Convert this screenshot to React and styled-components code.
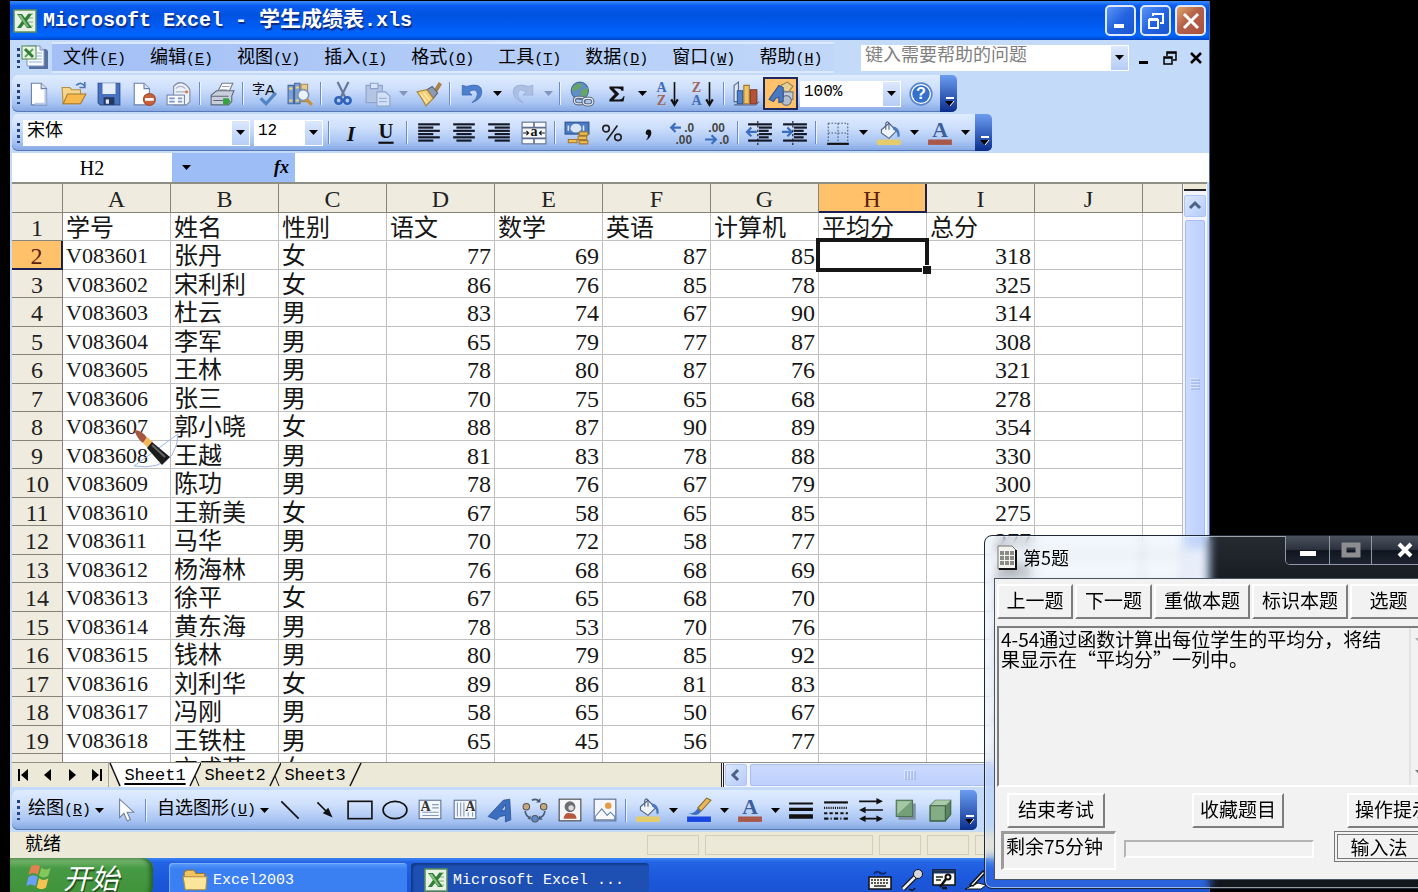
import React from 'react';
import styled, { createGlobalStyle, css } from 'styled-components';

const serif = '"Liberation Serif", "Noto Sans CJK SC", serif';
const mono = '"Liberation Mono", "Noto Sans CJK SC", monospace';
const sans = '"Noto Sans CJK SC", sans-serif';

const beige = '#ece9d8';
const headerLine = '#85847a';
const cellLine = '#c0c0c0';
const orange = '#ffc169';
const barGradient = 'linear-gradient(#dfecff, #cfe0fc 35%, #a9c5f3 75%, #83a6e2)';

const GlobalStyle = createGlobalStyle`
    * { box-sizing: border-box; }
    body { margin: 0; background: #000; overflow: hidden; }
    button, input, select, textarea { font: inherit; color: inherit; margin: 0; padding: 0; border: 0; border-radius: 0; background: none; outline: none; }
    svg { display: block; flex: none; overflow: visible; }
`;

const Desktop = styled.div`
    position: relative;
    height: 100vh;
    overflow: hidden;
    padding: 1px 208px 0 10px;
    background: #000;
    color: #000;
    font-family: ${mono};
    font-size: 15px;
`;

const Window = styled.div`
    display: flex;
    flex-direction: column;
    height: 100%;
    border-right: 1px solid #44669c;
    background: #c3daf9;
`;

const TitleBar = styled.header`
    flex: none;
    display: flex;
    align-items: center;
    gap: 4px;
    height: 39px;
    padding: 0 3px;
    background: linear-gradient(#3a8cff, #0a5cf0 12%, #0052e0 35%, #0060fa 75%, #0066ff 88%, #0046c8);
    color: #fff;
    font-weight: bold;
    font-size: 20px;

    h1 {
        flex: 1;
        margin: 0 0 0 2px;
        font-size: 20px;
        line-height: 30px;
        white-space: pre;
        text-shadow: 1px 2px 1px #0a2a80;
    }
    h1 span { font-size: 21px; }
`;

const CaptionButton = styled.button`
    display: grid;
    place-items: center;
    width: 31px;
    height: 31px;
    border: 2px solid #dfe9ff;
    border-radius: 5px;
    background: ${p => p.$close ? 'linear-gradient(135deg, #e0a566, #b4604a 45%, #a8523e)' : 'linear-gradient(135deg, #5b96f8, #2363e0 50%, #1a56d0)'};
`;

const MenuRow = styled.nav`
    flex: none;
    display: flex;
    align-items: center;
    height: 35px;
    padding-left: 6px;
`;

const MenuList = styled.div`
    display: flex;
    align-items: center;
    gap: 24px;
    height: 31px;
    margin-left: 3px;
    padding: 2px 12px 0 11px;
    border-top: 2px solid #dbe8fd;
    border-bottom: 2px solid #dbe8fd;
    background: linear-gradient(90deg, #a3bff5, #c0d7f9);
`;

const MenuButton = styled.button`
    flex: none;
    font-size: 18px;
    line-height: 26px;
    white-space: nowrap;

    span { font-size: 15px; }
`;

const Spacer = styled.div`
    flex: 1;
    max-width: ${p => p.$max ? p.$max + 'px' : 'none'};
`;

const Grip = styled.span`
    flex: none;
    width: 3px;
    height: 20px;
    margin: 0 1px;
    background: repeating-linear-gradient(#27417c 0 3px, transparent 3px 6px);
`;

const Toolbar = styled.div`
    flex: none;
    display: flex;
    align-items: stretch;
    align-self: flex-start;
    height: ${p => p.$tall ? 40 : 37}px;
    margin: 0 0 2px 2px;
    border-radius: 6px;
    background: ${barGradient};
    box-shadow: inset 0 -1px 0 #5878b8;
`;

const Tools = styled.div`
    display: flex;
    align-items: center;
    padding: 0 2px 0 4px;
`;

const Tool = styled.button`
    flex: none;
    display: grid;
    place-items: center;
    width: 35px;
    height: 33px;
    ${p => p.$on && css`
        border: 2px solid #20285c;
        background: ${orange};
    `}
`;

const Separator = styled.span`
    flex: none;
    width: 2px;
    height: 23px;
    margin: 0 3px;
    border-left: 1px solid #6a8ccb;
    border-right: 1px solid #eef4ff;
`;

const DropButton = styled.button`
    flex: none;
    display: grid;
    place-items: center;
    width: 16px;
    height: 30px;
`;

const ToolbarEnd = styled.button`
    display: flex;
    align-items: flex-end;
    justify-content: center;
    width: 17px;
    padding: 0 0 5px 2px;
    border-radius: 0 5px 5px 0;
    background: linear-gradient(#6c9cf0, #3a66c0 50%, #0c2f8c);
`;

const Combo = styled.label`
    flex: none;
    display: flex;
    align-items: center;
    width: ${p => p.$w}px;
    height: 26px;
    margin: 0 2px;
    border: 1px solid #fff;
    background: #fff;
    font-size: ${p => p.$latin ? 16 : 18}px;

    select, input {
        flex: 1;
        min-width: 0;
        height: 24px;
        padding: 0 3px 3px;
        appearance: none;
        line-height: 20px;
    }
    input::placeholder { color: #7f7f7f; opacity: 1; }
    > span {
        display: grid;
        place-items: center;
        width: 17px;
        height: 24px;
        background: linear-gradient(#dbe8fd, #b6cdf6);
        pointer-events: none;
    }
`;

const MdiButton = styled.button`
    width: 26px;
    height: 26px;
    display: grid;
    place-items: center;
`;

const FormulaRow = styled.div`
    flex: none;
    display: flex;
    height: 29px;
    margin-left: 2px;
    background: #9dbdf6;
    font-family: ${serif};

    input { background: #fff; }
`;

const NameBox = styled.input`
    width: 160px;
    padding-top: 2px;
    text-align: center;
    font-size: 20px;
`;

const FormulaInput = styled.input`
    flex: 1;
    min-width: 0;
`;

const FormulaButton = styled.button`
    width: ${p => p.$w}px;
    display: grid;
    place-items: center;
    font-family: ${serif};
    font-style: italic;
    font-weight: bold;
    font-size: 18px;
`;

const SheetArea = styled.main`
    flex: none;
    display: flex;
    height: 580px;
    overflow: hidden;
    margin: 0 2px;
    border-top: 2px solid #8d8f84;
    background: #fff;
`;

const SheetView = styled.div`
    flex: 1;
    min-width: 0;
    overflow: hidden;
    height: 578px;
`;

const SheetTable = styled.table`
    width: 100%;
    table-layout: fixed;
    border-collapse: separate;
    border-spacing: 0;
    font-family: ${serif};
    font-size: 24px;
    line-height: 24px;

    tr { height: 28px; }
    tr:nth-child(even) { height: 29px; }
    thead tr { height: 29px; }
`;

const Head = styled.th`
    padding: 3px 0 0;
    border-right: 1px solid ${headerLine};
    border-bottom: 1px solid ${headerLine};
    background: ${p => p.$on ? orange : '#efecdf'};
    color: ${p => p.$on ? '#5b2110' : '#222'};
    font-weight: normal;
    vertical-align: top;
    ${p => p.$on && css`
        border-right: 2px solid #1c2050;
        border-bottom: 2px solid #1c2050;
    `}
`;

const Cell = styled.td`
    position: relative;
    padding: 3px 3px 0;
    border-right: 1px solid ${cellLine};
    border-bottom: 1px solid ${cellLine};
    color: #161616;
    white-space: nowrap;
    vertical-align: top;
    text-align: ${p => p.$num ? 'right' : 'left'};
    font-size: ${p => p.$id ? 22 : 24}px;
    z-index: ${p => p.$active ? 1 : 'auto'};
`;

// thick frame and fill handle that lie over the active cell's grid lines
const ActiveFrame = styled.span`
    position: absolute;
    inset: -3px;
    border: 4px solid #161616;

    &::after {
        content: '';
        position: absolute;
        right: -6px;
        bottom: -6px;
        width: 8px;
        height: 8px;
        border-top: 1px solid #fff;
        border-left: 1px solid #fff;
        background: #161616;
    }
`;

const VScroll = styled.div`
    flex: none;
    width: 24px;
    padding: 0 1px;
    background: #f3f5fb;
`;

const SplitBox = styled.div`
    height: 7px;
    margin-bottom: 4px;
    border-bottom: 2px solid #222;
    background: ${beige};
`;

const ScrollButton = styled.button`
    flex: none;
    display: grid;
    place-items: center;
    width: 22px;
    height: 22px;
    border: 1px solid #b0c6f4;
    border-radius: 2px;
    background: linear-gradient(135deg, #dce8ff, #b5cbf8);
`;

const Thumb = styled.div`
    display: grid;
    place-items: center;
    border: 1px solid #a9bdf0;
    border-radius: 2px;
    ${p => p.$across ? css`
        width: 320px;
        height: 22px;
        margin-left: 3px;
        background: linear-gradient(#cbdaff, #bdd0fb);
    ` : css`
        width: 20px;
        height: 328px;
        margin: 3px 1px 0;
        background: linear-gradient(90deg, #cbdaff, #bdd0fb);
    `}
`;

const TabRow = styled.div`
    flex: none;
    display: flex;
    align-items: stretch;
    height: 25px;
    margin: 0 2px 3px;
    border-top: 1px solid #8d8f84;
    background: ${beige};
`;

const TabNav = styled.div`
    display: flex;
    width: 97px;
    border-right: 1px solid #aaa898;
`;

const NavButton = styled.button`
    flex: 1;
    display: grid;
    place-items: center;
`;

const Tab = styled.button`
    width: 68px;
    height: 24px;
    font-size: 17px;
    background: ${p => p.$on ? '#fff' : beige};
    text-decoration: ${p => p.$on ? 'underline' : 'none'};
    text-decoration-thickness: 2px;
    text-underline-offset: 3px;
`;

const HScroll = styled.div`
    display: flex;
    align-items: center;
    width: 486px;
    padding-left: 1px;
    border-left: 3px double #222;
    background: #f3f5fb;
`;

const DrawLabel = styled(MenuButton)`
    padding-left: 7px;
`;

const StatusBar = styled.footer`
    flex: none;
    display: flex;
    align-items: center;
    gap: 6px;
    height: 26px;
    padding: 0 4px 0 15px;
    background: ${beige};
    font-size: 18px;
    line-height: 24px;
`;

const StatusCell = styled.span`
    width: ${p => p.$w}px;
    height: 20px;
    border: 1px solid #d2cfbb;
`;

const Taskbar = styled.div`
    flex: 1;
    display: flex;
    gap: 4px;
    overflow: hidden;
    background: linear-gradient(#3a86f4, #2364e4 4px, #1c58dc 20px, #1b54d4);
    color: #fff;
`;

const StartButton = styled.button`
    display: flex;
    align-items: center;
    gap: 10px;
    width: 143px;
    height: 42px;
    margin-right: 12px;
    padding: 0 0 4px 15px;
    border-radius: 0 10px 14px 0;
    background: linear-gradient(#84bd7c, #479a44 10px, #3f9038);
    box-shadow: inset -3px 0 4px #245f22;
    font-family: ${sans};
    font-size: 28px;
    font-style: italic;
    line-height: 36px;
    text-shadow: 1px 2px 1px #1d4d1b;
`;

const TaskButton = styled.button`
    display: flex;
    align-items: center;
    gap: 5px;
    width: 238px;
    height: 40px;
    margin-top: 5px;
    padding: 0 0 6px 13px;
    border-radius: 4px;
    background: ${p => p.$on ? '#1e50b4' : 'linear-gradient(#5a9bfa, #3a80f3 6px)'};
    box-shadow: ${p => p.$on ? 'inset 2px 2px 2px #123a8a' : 'inset 1px 1px 1px #7db0ff'};
`;

const Tray = styled.div`
    display: flex;
    align-items: center;
    gap: 8px;
    width: 341px;
    height: 44px;
`;

const BrushCursor = styled.svg`
    position: absolute;
    left: 131px;
    top: 426px;
`;

const Dialog = styled.section`
    position: absolute;
    left: 984px;
    top: 535px;
    width: 464px;
    padding: 0 9px 8px;
    border: 1px solid #1d2634;
    border-radius: 8px;
    background: linear-gradient(rgba(190, 215, 250, .2), rgba(150, 190, 240, .12) 60px);
    backdrop-filter: blur(5px);
    box-shadow: inset 0 0 0 1px rgba(235, 245, 255, .6);
    font-family: ${sans};
    font-size: 19px;
`;

const DialogTitle = styled.header`
    display: flex;
    align-items: center;
    gap: 6px;
    height: 42px;
    padding-left: 3px;

    h2 {
        flex: 1;
        margin: 0;
        font-size: 18px;
        font-weight: normal;
        line-height: 28px;
    }
`;

const GlassButtons = styled.div`
    display: flex;
    align-self: flex-start;
    height: 29px;
    border: 1px solid #9098a6;
    border-top: 0;
    border-radius: 0 0 5px 5px;
    overflow: hidden;
`;

const GlassButton = styled.button`
    display: grid;
    place-items: center;
    width: ${p => p.$w}px;
    background: linear-gradient(#4a525e, #2b323d 48%, #10161f 52%, #1d2430);
    & + & { border-left: 1px solid #9098a6; }
`;

const DialogBody = styled.div`
    height: 302px;
    border: 1px solid #4a5564;
    background: #f2f2f2;
    padding: 5px 0 0 2px;
`;

const ButtonRow = styled.div`
    display: flex;
    gap: 2px;
`;

const Raised = styled.button`
    flex: none;
    width: ${p => p.$w}px;
    height: 35px;
    padding-bottom: 3px;
    border: 2px solid;
    border-color: #fff #7d7d7d #7d7d7d #fff;
    background: #f2f2f2;
    line-height: 26px;
    white-space: nowrap;
`;

const QuestionBox = styled.div`
    display: flex;
    height: 161px;
    margin-top: 7px;
    border: 2px solid;
    border-color: #7d7d7d #fff #fff #7d7d7d;

    textarea {
        width: 410px;
        padding: 1px 10px 0 2px;
        resize: none;
        overflow: hidden;
        line-height: 20px;
    }
`;

const QuestionScroll = styled.div`
    flex: 1;
    display: flex;
    flex-direction: column;
    justify-content: space-between;
    padding: 10px 4px;
    border-left: 2px solid #e2e2e2;
`;

const ActionRow = styled.div`
    display: grid;
    grid-template-columns: 185px 155px auto;
    padding: 6px 0 0 10px;
`;

const FootRow = styled.div`
    display: flex;
    align-items: flex-start;
    gap: 8px;
    padding: 3px 0 0 4px;
`;

const TimeLeft = styled.output`
    width: 115px;
    height: 39px;
    padding: 0 2px;
    border: solid;
    border-width: 3px 2px 2px 3px;
    border-color: #9b9b9b #fff #fff #9b9b9b;
    line-height: 24px;
`;

const ProgressWell = styled.div`
    width: 190px;
    height: 18px;
    margin: 9px 12px 0 0;
    border: 2px solid;
    border-color: #b4b4b4 #fff #fff #b4b4b4;
`;

const InputMethod = styled.button`
    width: 90px;
    height: 31px;
    border: 4px double #777;
    line-height: 20px;
`;

const Icon = ({ size = 26, children }) => (
    <svg width={size} height={size} viewBox="0 0 24 24" fill="none">{children}</svg>
);

const Down = ({ color = '#000' }) => (
    <svg width="9" height="5" viewBox="0 0 9 5"><path d="M0 0h9L4.5 5z" fill={color} /></svg>
);

const Chevron = ({ turn = 0 }) => (
    <svg width="14" height="14" viewBox="0 0 14 14"><path d="M2 9l5-5 5 5" fill="none" stroke="#4d6185" strokeWidth="3" transform={`rotate(${turn} 7 7)`} /></svg>
);

const ExcelLogo = ({ size = 24 }) => (
    <Icon size={size}>
        <rect x="1" y="1" width="22" height="22" fill="#e8f2e4" stroke="#5b8f58" strokeWidth="1.5" />
        <path d="M15 5h5M15 9h5M15 13h5M15 17h5" stroke="#9fc39b" strokeWidth="1.5" />
        <path d="M4 5h5l3 4 3-4h4l-5 7 5 7h-5l-3-4-3 4H4l5-7z" fill="#2f7e38" />
        <path d="M5 6h3l8 12h-2z" fill="#86c07a" />
    </Icon>
);

const BookIcon = () => (
    <svg width="28" height="25" viewBox="0 0 28 25" fill="none">
        <path d="M8 4h17l2 2v18H8z" fill="#56709f" />
        <path d="M6 1h13l4 4v16H6z" fill="#fbfcff" stroke="#7d93c0" />
        <path d="M19 1v4h4" fill="#cddaf0" stroke="#7d93c0" />
        <path d="M16 8h5M16 11h5M16 14h5M8 17h13" stroke="#8eb2d8" />
        <rect x="1" y="1" width="14" height="13" fill="#e8f2e4" stroke="#4d8a4d" />
        <path d="M12 4l-8 8" stroke="#5ba35c" strokeWidth="2" />
        <path d="M4 4l8 8" stroke="#2f7e38" strokeWidth="3" />
    </svg>
);

const bucket = (
    <>
        <path d="M5 9l7-6 7 7-7 7-7-5z" fill="#eef3fb" stroke="#50607c" />
        <path d="M9 9V3q1.5-2.5 3 0v6" stroke="#50607c" />
        <path d="M15 6q7 0 7 9l-2 1q0-6-4-7z" fill="#4a79c0" />
        <rect x="1" y="18" width="22" height="5" rx="1" fill="#e4cc6a" />
    </>
);

const page = <path d="M5 2h9l5 5v15H5z" fill="#fff" stroke="#6b7fa8" />;

const fontColor = (
    <>
        <text x="12" y="16" textAnchor="middle" fontFamily="Liberation Serif" fontWeight="bold" fontSize="20" fill="#3c5f9c">A</text>
        <rect x="1" y="18" width="22" height="5" fill="#a9594a" />
    </>
);

const lines = rows => rows.map(([x, w], i) => <rect key={i} x={x} y={3 + i * 3} width={w} height="2" fill="#151a28" />);

const letter = (x, y, t, color) => (
    <text x={x} y={y} textAnchor="middle" fontFamily="Liberation Serif" fontWeight="bold" fontSize="13" fill={color}>{t}</text>
);

const digits = (x, y, t) => (
    <text x={x} y={y} fontFamily="Liberation Sans" fontWeight="bold" fontSize="11" fill="#444">{t}</text>
);

const icons = {
    new: <>{page}<path d="M14 2v5h5" fill="#d5e0f4" stroke="#6b7fa8" /><path d="M18 8v13H8" stroke="#b9c8e6" strokeWidth="2" /></>,
    open: (
        <>
            <path d="M1 6h7l2 2h8v13H2z" fill="#f4d68c" stroke="#b98d3e" />
            <path d="M6 12h17l-5 9H2z" fill="#f7b84c" stroke="#a87830" />
            <path d="M14 4q5-4 8 1M22 1v5h-5" stroke="#4d76b8" strokeWidth="1.5" />
        </>
    ),
    save: (
        <>
            <path d="M2 2h20v20H4l-2-2z" fill="#4872c0" stroke="#2d4f94" />
            <rect x="6" y="2" width="12" height="10" fill="#e6eefb" />
            <rect x="7" y="15" width="10" height="7" fill="#24385f" />
            <rect x="9" y="17" width="3" height="4" fill="#dfe8f8" />
        </>
    ),
    permission: (
        <>
            <path d="M3 2h9l5 5v15H3z" fill="#fff" stroke="#6b7fa8" />
            <path d="M12 2v5h5" fill="#d5e0f4" stroke="#6b7fa8" />
            <circle cx="17" cy="17" r="5.5" fill="#c8603c" stroke="#a34a2c" />
            <path d="M13 17h8" stroke="#fff" strokeWidth="2.5" />
        </>
    ),
    mail: (
        <>
            <path d="M7 12V5q6-7 13 0l2 3v11l-3 3H7z" fill="#eef1f7" stroke="#7f8aa3" />
            <path d="M9 7q4-4 9 0M9 10h10" stroke="#aab4c8" />
            <circle cx="19" cy="10" r="1.5" fill="#d77b4f" />
            <rect x="1" y="13" width="16" height="9" fill="#f8fafe" stroke="#7787a8" />
            <path d="M3 16h5M3 19h5M11 16h4M11 19h4" stroke="#7d96c4" strokeWidth="1.5" />
        </>
    ),
    print: (
        <>
            <path d="M8 10l4-8h10l-4 9z" fill="#fff" stroke="#6f7a90" />
            <path d="M12 5h7M10 8h7" stroke="#98a4ba" />
            <path d="M2 13l5-4h16l-2 5v5l-3 3H2z" fill="#c9cfda" stroke="#5c6678" />
            <path d="M2 14h16M4 18h9" stroke="#5c6678" />
            <path d="M13 16h5l2 3-3 3h-4z" fill="#36a045" />
        </>
    ),
    spell: (
        <>
            <text x="0" y="11" fontFamily="Noto Sans CJK SC" fontSize="12" fill="#111">字</text>
            <text x="12" y="13" fontFamily="Liberation Sans" fontSize="14" fill="#111">A</text>
            <path d="M8 16l5 5 9-10" stroke="#5185c6" strokeWidth="3" />
        </>
    ),
    research: (
        <>
            <path d="M1 4h5v17H1zM7 2h5v19H7z" fill="#7ba0d6" stroke="#46689f" />
            <path d="M2 7h3M8 6h3M2 18h3M8 18h3" stroke="#f1d37a" strokeWidth="2" />
            <path d="M13 3h6v16h-6z" fill="#e6c98e" stroke="#a98a4e" />
            <circle cx="15" cy="13" r="5" fill="#e9f4ff" stroke="#8495b4" strokeWidth="1.5" />
            <path d="M18 17l5 5" stroke="#c89334" strokeWidth="3" />
        </>
    ),
    cut: (
        <>
            <path d="M7 1l7 14M17 1l-7 14" stroke="#64779c" strokeWidth="2" />
            <circle cx="8" cy="18" r="3" stroke="#2f62b8" strokeWidth="2.5" />
            <circle cx="16" cy="18" r="3" stroke="#2f62b8" strokeWidth="2.5" />
        </>
    ),
    paste: (
        <>
            <rect x="1" y="4" width="15" height="16" fill="#b4c5e4" stroke="#8ba1c9" />
            <path d="M5 2h7v5H5z" fill="#d8e3f5" stroke="#8ba1c9" />
            <path d="M11 10h8l4 4v9H11z" fill="#d4e0f5" stroke="#8ba1c9" />
            <path d="M13 16h7M13 19h7" stroke="#9db2d6" />
        </>
    ),
    painter: (
        <>
            <path d="M16 9l5-8 3 2-5 8z" fill="#ab8146" />
            <path d="M10 8l5-3 5 6-4 5z" fill="#8d99ae" stroke="#59657c" />
            <path d="M1 10l9-2 6 8-7 7q-2-5-8-13z" fill="#f4d07a" stroke="#a8843c" />
            <path d="M4 12l6 8M7 11l6 7" stroke="#fdeeb9" />
        </>
    ),
    undo: <path d="M3 4v9h9l-3-3q7-4 8 2 0 4-5 8 9-3 9-10 0-9-14-5z" fill="#4d80ce" stroke="#2f5ba8" strokeWidth=".6" />,
    redo: <path d="M21 4v9h-9l3-3q-7-4-8 2 0 4 5 8-9-3-9-10 0-9 14-5z" fill="#adc0e4" stroke="#8fa6d0" strokeWidth=".6" />,
    link: (
        <>
            <circle cx="10" cy="9" r="8" fill="#5f8fc6" stroke="#416b9f" />
            <path d="M4 5q5-4 8-2-1 5-5 5-3 3-4 0zM11 9l6-3q2 5-3 9-4-1-3-6z" fill="#67a563" />
            <rect x="5" y="15" width="9" height="6" rx="3" stroke="#5d6a80" strokeWidth="3" />
            <rect x="5" y="15" width="9" height="6" rx="3" stroke="#e8edf4" />
            <rect x="13" y="16" width="9" height="6" rx="3" stroke="#5d6a80" strokeWidth="3" />
            <rect x="13" y="16" width="9" height="6" rx="3" stroke="#e8edf4" />
        </>
    ),
    sum: <path d="M5 5h13v4h-2q0-2-4-2H9l5 5-5 5h5q3 0 4-3h1l-1 5H5v-2l5-5-5-5z" fill="#111" />,
    az: <>{letter(6, 10, 'A', '#3f6ab4')}{letter(6, 22, 'Z', '#a0655a')}<path d="M18 1v20" stroke="#111" strokeWidth="1.5" /><path d="M15 17l3 5 3-5" stroke="#111" strokeWidth="2" /></>,
    za: <>{letter(6, 10, 'Z', '#a0655a')}{letter(6, 22, 'A', '#3f6ab4')}<path d="M18 1v20" stroke="#111" strokeWidth="1.5" /><path d="M15 17l3 5 3-5" stroke="#111" strokeWidth="2" /></>,
    chart: (
        <>
            <path d="M1 4l4-3v18H1zM1 22h20l3-3" fill="#dfe7f5" stroke="#54678f" />
            <path d="M4 9h5v12H4z" fill="#4f82cc" stroke="#30558f" />
            <path d="M10 4h5v17h-5z" fill="#f2c25d" stroke="#9c7831" />
            <path d="M16 8h6v12l-1 1h-5z" fill="#b55339" stroke="#823525" />
        </>
    ),
    drawing: (
        <>
            <path d="M12 4l6-3 5 4-4 5-7-1z" fill="#e8cf8e" stroke="#8f8260" />
            <path d="M14 10h9v7h-9z" fill="#c2cbd8" stroke="#6d7888" />
            <circle cx="17" cy="18" r="4.5" fill="#b5bfcc" stroke="#677283" />
            <path d="M1 17L10 4l4 2v13l-4 1v-5l-3 1-2 3z" fill="#4a79c4" stroke="#31558f" />
        </>
    ),
    help: (
        <>
            <circle cx="12" cy="12" r="10" fill="#fff" stroke="#5b88cc" strokeWidth="1.5" />
            <circle cx="12" cy="12" r="8" fill="#3570cc" />
            <text x="12" y="17" textAnchor="middle" fontFamily="Liberation Sans" fontWeight="bold" fontSize="15" fill="#fff">?</text>
        </>
    ),
    italic: <text x="12" y="19" textAnchor="middle" fontFamily="Liberation Serif" fontStyle="italic" fontWeight="bold" fontSize="20" fill="#111">I</text>,
    underline: <><text x="12" y="17" textAnchor="middle" fontFamily="Liberation Serif" fontWeight="bold" fontSize="19" fill="#111">U</text><path d="M5 21h14" stroke="#111" strokeWidth="2" /></>,
    left: lines([[2, 20], [2, 14], [2, 20], [2, 14], [2, 20], [2, 14]]),
    center: lines([[2, 20], [5, 14], [2, 20], [5, 14], [2, 20], [5, 14]]),
    right: lines([[2, 20], [8, 14], [2, 20], [8, 14], [2, 20], [8, 14]]),
    merge: (
        <>
            <rect x="1" y="2" width="22" height="20" fill="#f7f9fd" stroke="#5e6d8c" />
            <path d="M1 7h22M1 17h22M12 2v5M12 17v5" stroke="#5e6d8c" strokeWidth="1.5" />
            <path d="M2 12h5M5 10l2 2-2 2M22 12h-5M19 10l-2 2 2 2" stroke="#111" />
            <text x="12" y="15" textAnchor="middle" fontFamily="Liberation Serif" fontWeight="bold" fontSize="13" fill="#111">a</text>
        </>
    ),
    currency: (
        <>
            <rect x="1" y="2" width="22" height="11" fill="#4c7bc4" stroke="#2d5090" />
            <ellipse cx="11" cy="7.5" rx="5" ry="4" fill="#d7e4f8" />
            <path d="M4 5v5M18 5v5" stroke="#d7e4f8" strokeWidth="1.5" />
            <path d="M14 11h8v3h-8zM13 15h8v3h-8zM14 19h8v3h-8zM4 18h8v3H4z" fill="#edbf52" stroke="#a6772b" />
        </>
    ),
    percent: <><circle cx="6.500" cy="8" r="3" stroke="#222" strokeWidth="1.5" /><circle cx="17.5" cy="16" r="3" stroke="#222" strokeWidth="1.5" /><path d="M17 5L7 19" stroke="#222" strokeWidth="1.5" /></>,
    comma: <path d="M12 9q4-1 4 3 0 4-5 7 2-3 2-5-4-1-1-5z" fill="#111" />,
    incDec: <>{digits(14, 11, '.0')}{digits(6, 22, '.00')}<path d="M2 7h9M6 3L2 7l4 4" stroke="#3a6cc0" strokeWidth="2" /></>,
    decDec: <>{digits(4, 11, '.00')}{digits(14, 22, '.0')}<path d="M1 18h9M7 14l4 4-4 4" stroke="#3a6cc0" strokeWidth="2" /></>,
    outdent: <>{lines([[1, 22], [11, 12], [11, 9], [11, 12], [11, 9], [1, 22]])}<path d="M0 11h9M4 7l-4 4 4 4" stroke="#3a6cc0" strokeWidth="2" /><path d="M10 1v22" stroke="#111" strokeDasharray="2 2" /></>,
    indent: <>{lines([[1, 22], [11, 12], [11, 9], [11, 12], [11, 9], [1, 22]])}<path d="M0 11h8M5 7l4 4-4 4" stroke="#3a6cc0" strokeWidth="2" /><path d="M10 1v22" stroke="#111" strokeDasharray="2 2" /></>,
    borders: <><path d="M3 3h18v18M3 3v18M12 3v18M3 12h18" stroke="#4f5f80" strokeDasharray="1.5 1.5" /><path d="M2 22h20" stroke="#111" strokeWidth="2" /></>,
    fill: bucket,
    fontColor,
    pointer: <path d="M7 2v17l4-4 3 7 3-1-3-7h6z" fill="#fff" stroke="#7182a4" />,
    line: <path d="M4 4l16 16" stroke="#111" strokeWidth="1.5" />,
    arrow: <><path d="M5 5l10 10" stroke="#111" strokeWidth="1.5" /><path d="M19 19l-9-4 5-5z" fill="#111" /></>,
    rect: <rect x="1" y="4" width="22" height="16" stroke="#111" strokeWidth="1.5" />,
    oval: <ellipse cx="12" cy="12" rx="11" ry="8" stroke="#111" strokeWidth="1.5" />,
    textbox: <><rect x="2" y="3" width="20" height="17" fill="#f3f7fe" stroke="#5f7196" />{letter(8, 13, 'A', '#333')}<path d="M14 7h6M14 10h6M5 14h15M5 17h15" stroke="#8698bc" /></>,
    vtext: <><rect x="2" y="3" width="20" height="17" fill="#f3f7fe" stroke="#5f7196" /><path d="M5 5v13M8 5v13M11 5v13M15 14v4M19 14v4" stroke="#8698bc" />{letter(17, 13, 'A', '#333')}</>,
    wordart: <path d="M1 18l14-15 6-1 1 19-5 2v-6l-5 1-3 3zM13 13l4-1V7z" fill="#3c6fc0" stroke="#244b8c" strokeWidth=".7" fillRule="evenodd" />,
    diagram: (
        <>
            <path d="M9 3q4-2 7 1M3 13q0 4 4 6M21 13q0 4-4 6" stroke="#4a5a78" strokeWidth="1.5" />
            <path d="M17 1v4h-4zM8 21v-4l-3 3zM15 21l4 0-3-4z" fill="#4a5a78" />
            <circle cx="4" cy="9" r="3" fill="#c9a77c" stroke="#555" />
            <circle cx="20" cy="9" r="3" fill="#c9a77c" stroke="#555" />
            <circle cx="12" cy="20" r="3" fill="#5c8cd0" stroke="#555" />
        </>
    ),
    clipart: <><rect x="2" y="2" width="20" height="20" fill="#f5f6f8" stroke="#444" /><circle cx="12" cy="9" r="5" fill="#6a6d72" /><circle cx="13" cy="10" r="2.5" fill="#ddd" /><path d="M6 20q1-6 6-5 6 0 6 5z" fill="#b5583e" /></>,
    picture: <><rect x="2" y="2" width="20" height="20" fill="#f4f8fe" stroke="#55688f" /><circle cx="15" cy="8" r="3" fill="#e79a44" /><path d="M3 18l6-7 5 6 3-3 4 4v3H3z" fill="#f8fafd" stroke="#6b82aa" /></>,
    pen: <><path d="M2 15q6 1 9-5l3 3q-3 6-12 2z" fill="#3e6fc4" /><path d="M11 10l8-9 4 2-9 10z" fill="#e7b75c" stroke="#8d6a2c" /><rect x="1" y="18" width="22" height="5" fill="#1747e0" /></>,
    weights: <path d="M1 5h22v2H1zM1 10h22v3H1zM1 16h22v4H1z" fill="#111" />,
    dashes: <><path d="M1 5h22" stroke="#111" strokeWidth="2" /><path d="M1 10h22" stroke="#111" strokeWidth="2" strokeDasharray="1 1" /><path d="M1 15h22" stroke="#111" strokeWidth="2" strokeDasharray="3 2" /><path d="M1 20h22" stroke="#111" strokeWidth="2" strokeDasharray="4 2 1 2" /></>,
    arrows: <><path d="M1 4h19M4 12h19M4 20h16" stroke="#111" strokeWidth="1.5" /><path d="M23 4l-6-3v6zM1 12l6-3v6zM1 20l6-3v6zM23 20l-6-3v6z" fill="#111" /></>,
    shadow: <><rect x="5" y="6" width="16" height="15" fill="#7e8fa8" /><rect x="3" y="3" width="15" height="15" fill="#74a077" stroke="#4d7352" /><path d="M4 4h13L4 16z" fill="#a4c7a4" /></>,
    cube: <><path d="M2 8l5-5h14v13l-5 6H2z" fill="#5c8660" stroke="#3d5f42" /><path d="M2 8l5-5h14l-5 5z" fill="#a9cba8" /><path d="M2 8h14v14H2z" fill="#84ad85" stroke="#3d5f42" /></>,
    flag: (
        <>
            <path d="M5 3q4-3 8 0l-2 7q-4-3-8 0z" fill="#df8250" />
            <path d="M14 4q4 3 8 0l-2 7q-4 3-8 0z" fill="#84c85c" />
            <path d="M3 12q4-3 8 0l-2 8q-4-3-8 0z" fill="#6ba0f4" />
            <path d="M12 13q4 3 8 0l-2 8q-4 3-8 0z" fill="#f4c352" />
        </>
    ),
    folder: <><path d="M2 5l2-2h7l2 3h8v5H2z" fill="#f0c463" stroke="#9c7830" /><path d="M1 9h22l-1 12H3z" fill="#fbe59a" stroke="#b48d3e" /></>,
    keyboard: <><path d="M6 6q3-4 6-1 4 2 6-1" stroke="#0c2c78" strokeWidth="2" /><rect x="1" y="9" width="22" height="12" fill="#f5f5ee" stroke="#111" strokeWidth="1.5" /><path d="M3 12h18M3 15h18" stroke="#222" strokeWidth="1.5" strokeDasharray="2 1" /><path d="M6 18h12" stroke="#222" strokeWidth="1.5" /></>,
    mic: <><path d="M3 21L15 9" stroke="#111" strokeWidth="5" /><path d="M3 21L15 9" stroke="#eee" strokeWidth="2.5" /><circle cx="18" cy="6" r="4.5" fill="#d5d7da" stroke="#111" /><path d="M9 21q4 3 6-1" stroke="#111" strokeWidth="1.5" /></>,
    handwrite: <><rect x="1" y="2" width="22" height="15" fill="#fbfbf7" stroke="#111" strokeWidth="1.5" /><path d="M1 4h22" stroke="#1b2f60" strokeWidth="3" /><path d="M4 9h7M4 12h5" stroke="#222" strokeWidth="1.5" /><circle cx="16" cy="9" r="2.5" stroke="#111" strokeWidth="2" /><path d="M14 11l-6 8M10 20h5" stroke="#111" strokeWidth="2.5" /></>,
    pad: <><path d="M1 21h16l5-4-8-2z" fill="#fff" stroke="#111" /><path d="M6 17L19 3l2 2L9 18z" fill="#eee" stroke="#111" strokeWidth="1.5" /></>,
};

// '|' is a separator, 'v' a drop-down arrow, 'x' a greyed one; the rest are icon names
const ToolItems = ({ items }) => items.map((item, i) => {
    if (item === '|') return <Separator key={i} />;
    if (item === 'v' || item === 'x') {
        return <DropButton key={i} aria-label="更多"><Down color={item === 'x' ? '#8195bd' : '#000'} /></DropButton>;
    }
    return <Tool key={i} aria-label={item} $on={item === 'drawing'}><Icon>{icons[item]}</Icon></Tool>;
});

const BarEnd = () => (
    <ToolbarEnd aria-label="工具栏选项">
        <svg width="10" height="10" viewBox="0 0 10 10"><path d="M1 0h8v2H1z" fill="#fff" /><path d="M0 4h9L4.500 9z" fill="#000" /><path d="M9 4l-4 5" stroke="#fff" /></svg>
    </ToolbarEnd>
);

const menus = [
    ['文件', 'F'], ['编辑', 'E'], ['视图', 'V'], ['插入', 'I'], ['格式', 'O'],
    ['工具', 'T'], ['数据', 'D'], ['窗口', 'W'], ['帮助', 'H'],
];

const standardTools = [
    'new', 'open', 'save', 'permission', 'mail', '|', 'print', '|', 'spell', 'research', '|',
    'cut', 'paste', 'x', 'painter', '|', 'undo', 'v', 'redo', 'x', '|', 'link', 'sum', 'v', 'az', 'za', '|', 'chart', 'drawing',
];

const formatTools = [
    '|', 'italic', 'underline', '|', 'left', 'center', 'right', 'merge', '|',
    'currency', 'percent', 'comma', 'incDec', 'decDec', '|', 'outdent', 'indent', '|',
    'borders', 'v', 'fill', 'v', 'fontColor', 'v',
];

const drawTools = [
    'line', 'arrow', 'rect', 'oval', 'textbox', 'vtext', 'wordart', 'diagram', 'clipart', 'picture', '|',
    'fill', 'v', 'pen', 'v', 'fontColor', 'v', 'weights', 'dashes', 'arrows', 'shadow', 'cube',
];

const columns = ['A', 'B', 'C', 'D', 'E', 'F', 'G', 'H', 'I', 'J', ''];
const fields = ['学号', '姓名', '性别', '语文', '数学', '英语', '计算机', '平均分', '总分'];

const students = [
    ['V083601', '张丹', '女', 77, 69, 87, 85],
    ['V083602', '宋利利', '女', 86, 76, 85, 78],
    ['V083603', '杜云', '男', 83, 74, 67, 90],
    ['V083604', '李军', '男', 65, 79, 77, 87],
    ['V083605', '王林', '男', 78, 80, 87, 76],
    ['V083606', '张三', '男', 70, 75, 65, 68],
    ['V083607', '郭小晓', '女', 88, 87, 90, 89],
    ['V083608', '王越', '男', 81, 83, 78, 88],
    ['V083609', '陈功', '男', 78, 76, 67, 79],
    ['V083610', '王新美', '女', 67, 58, 65, 85],
    ['V083611', '马华', '男', 70, 72, 58, 77],
    ['V083612', '杨海林', '男', 76, 68, 68, 69],
    ['V083613', '徐平', '女', 67, 65, 68, 70],
    ['V083614', '黄东海', '男', 78, 53, 70, 76],
    ['V083615', '钱林', '男', 80, 79, 85, 92],
    ['V083616', '刘利华', '女', 89, 86, 81, 83],
    ['V083617', '冯刚', '男', 58, 65, 50, 67],
    ['V083618', '王铁柱', '男', 65, 45, 56, 77],
];

const Sheet = () => (
    <SheetTable>
        <colgroup>
            <col style={{ width: 51 }} />
            {columns.slice(0, -1).map(c => <col key={c} style={{ width: 108 }} />)}
            <col />
        </colgroup>
        <thead>
            <tr>
                <Head />
                {columns.map(c => <Head key={c} $on={c === 'H'}>{c}</Head>)}
            </tr>
        </thead>
        <tbody>
            <tr>
                <Head scope="row">1</Head>
                {fields.map(f => <Cell key={f}>{f}</Cell>)}
                <Cell /><Cell />
            </tr>
            {students.map((s, i) => (
                <tr key={s[0]}>
                    <Head scope="row" $on={i === 0}>{i + 2}</Head>
                    {s.map((value, n) => <Cell key={n} $id={n === 0} $num={n > 2}>{value}</Cell>)}
                    <Cell $active={i === 0}>{i === 0 && <ActiveFrame />}</Cell>
                    <Cell $num>{s[3] + s[4] + s[5] + s[6]}</Cell>
                    <Cell /><Cell />
                </tr>
            ))}
            <tr>
                <Head />
                <Cell />
                <Cell>方成荣</Cell>
                <Cell>女</Cell>
                {columns.slice(3).map(c => <Cell key={c} />)}
            </tr>
        </tbody>
    </SheetTable>
);

const Slant = ({ kind }) => (
    <svg width="12" height="24" viewBox="0 0 12 24">
        {kind === 'first' && <><path d="M1 0h11v24z" fill="#fff" /><path d="M1 0l10 23" stroke="#111" strokeWidth="1.5" /></>}
        {kind === 'active' && <path d="M0 0h12L1 23H0z" fill="#fff" />}
        {kind !== 'first' && <path d="M12 0L1 23" stroke="#111" strokeWidth="1.5" />}
        {kind !== 'first' && kind !== 'last' && <path d="M6 13l4 10" stroke="#111" />}
    </svg>
);

const navShapes = [
    'M1 1h2v12H1zM11 1v12L4 7z',
    'M10 1v12L3 7z',
    'M4 1v12l7-6z',
    'M3 1v12l7-6zM11 1h2v12h-2z',
];

const QuestionDialog = () => (
    <Dialog role="dialog" aria-labelledby="dialog-title">
        <DialogTitle>
            <svg width="20" height="25" viewBox="0 0 20 25">
                <path d="M1 1h14l4 4v19H1z" fill="#f4f4ee" stroke="#777" />
                <path d="M2 24h17V5" fill="none" stroke="#111" strokeWidth="2" />
                <path d="M3 6h4v4H3zM8 6h4v4H8zM13 6h4v4h-4zM3 11h4v4H3zM8 11h4v4H8zM13 11h4v4h-4zM3 16h4v4H3zM8 16h4v4H8zM13 16h4v4h-4z" fill="#8a8a86" />
            </svg>
            <h2 id="dialog-title">第5题</h2>
            <GlassButtons>
                <GlassButton $w={43} aria-label="最小化"><svg width="18" height="16" viewBox="0 0 18 16"><path d="M1 9h16v5H1z" fill="#fff" /></svg></GlassButton>
                <GlassButton $w={42} aria-label="最大化"><svg width="20" height="16" viewBox="0 0 20 16"><path d="M3 3h14v10H3z" fill="none" stroke="#8b8d91" strokeWidth="5" /></svg></GlassButton>
                <GlassButton $w={66} aria-label="关闭"><svg width="18" height="16" viewBox="0 0 18 16"><path d="M3 2l12 12M15 2L3 14" stroke="#fff" strokeWidth="4" /></svg></GlassButton>
            </GlassButtons>
        </DialogTitle>
        <DialogBody>
            <ButtonRow>
                <Raised $w={76}>上一题</Raised>
                <Raised $w={77}>下一题</Raised>
                <Raised $w={96}>重做本题</Raised>
                <Raised $w={96}>标识本题</Raised>
                <Raised $w={77}>选题</Raised>
            </ButtonRow>
            <QuestionBox>
                <textarea readOnly aria-label="题目" value="4-54通过函数计算出每位学生的平均分，将结果显示在“平均分”一列中。" />
                <QuestionScroll>
                    <Down color="#aaa" />
                    <Down color="#777" />
                </QuestionScroll>
            </QuestionBox>
            <ActionRow>
                <Raised $w={98}>结束考试</Raised>
                <Raised $w={92}>收藏题目</Raised>
                <Raised $w={92}>操作提示</Raised>
            </ActionRow>
            <FootRow>
                <TimeLeft>剩余75分钟</TimeLeft>
                <ProgressWell />
                <InputMethod>输入法</InputMethod>
            </FootRow>
        </DialogBody>
    </Dialog>
);

const App = () => (
    <Desktop>
        <GlobalStyle />
        <Window>
            <TitleBar>
                <ExcelLogo />
                <h1>Microsoft Excel - <span>学生成绩表</span>.xls</h1>
                <CaptionButton aria-label="最小化"><svg width="20" height="20"><path d="M3 13h10v4H3z" fill="#fff" /></svg></CaptionButton>
                <CaptionButton aria-label="还原"><svg width="20" height="20" fill="none" stroke="#fff" strokeWidth="2"><path d="M3 9h9v8H3zM3 8h9M7 5V3h10v9h-3M7 3h10" /></svg></CaptionButton>
                <CaptionButton $close aria-label="关闭"><svg width="20" height="20"><path d="M3 3l14 14M17 3L3 17" stroke="#fff" strokeWidth="3" /></svg></CaptionButton>
            </TitleBar>

            <MenuRow>
                <Grip />
                <BookIcon />
                <MenuList>
                    {menus.map(([name, key]) => (
                        <MenuButton key={key}>{name}<span>(<u>{key}</u>)</span></MenuButton>
                    ))}
                </MenuList>
                <Spacer />
                <Combo $w={268}>
                    <input aria-label="帮助" placeholder="键入需要帮助的问题" />
                    <span><Down /></span>
                </Combo>
                <MdiButton aria-label="最小化"><svg width="14" height="14"><path d="M2 10h9v3H2z" /></svg></MdiButton>
                <MdiButton aria-label="还原"><svg width="14" height="14" fill="none" stroke="#000" strokeWidth="1.5"><path d="M1 6h8v7H1zM1 7h8M4 5V1h9v8h-3M4 2h9" /></svg></MdiButton>
                <MdiButton aria-label="关闭"><svg width="14" height="14"><path d="M2 2l10 10M12 2L2 12" stroke="#000" strokeWidth="2.5" /></svg></MdiButton>
            </MenuRow>

            <Toolbar>
                <Tools>
                    <Grip />
                    <ToolItems items={standardTools} />
                    <Combo $w={101} $latin>
                        <select aria-label="显示比例"><option>100%</option></select>
                        <span><Down /></span>
                    </Combo>
                    <ToolItems items={['help']} />
                </Tools>
                <BarEnd />
            </Toolbar>
            <Toolbar>
                <Tools>
                    <Grip />
                    <Combo $w={227}>
                        <select aria-label="字体"><option>宋体</option></select>
                        <span><Down /></span>
                    </Combo>
                    <Combo $w={69} $latin>
                        <select aria-label="字号"><option>12</option></select>
                        <span><Down /></span>
                    </Combo>
                    <ToolItems items={formatTools} />
                </Tools>
                <BarEnd />
            </Toolbar>

            <FormulaRow>
                <NameBox aria-label="名称框" defaultValue="H2" />
                <FormulaButton $w={28} aria-label="名称列表"><Down /></FormulaButton>
                <Spacer $max={68} />
                <FormulaButton $w={27} aria-label="插入函数">fx</FormulaButton>
                <FormulaInput aria-label="编辑栏" />
            </FormulaRow>

            <SheetArea>
                <SheetView><Sheet /></SheetView>
                <VScroll>
                    <SplitBox />
                    <ScrollButton aria-label="向上"><Chevron /></ScrollButton>
                    <Thumb><svg width="10" height="12"><path d="M0 1h9M0 4h9M0 7h9M0 10h9" stroke="#eef3ff" /><path d="M1 2h9M1 5h9M1 8h9M1 11h9" stroke="#8ea8e4" /></svg></Thumb>
                </VScroll>
            </SheetArea>

            <TabRow>
                <TabNav>
                    {navShapes.map(d => <NavButton key={d} aria-label="滚动工作表"><svg width="14" height="14"><path d={d} /></svg></NavButton>)}
                </TabNav>
                <Slant kind="first" />
                <Tab $on>Sheet1</Tab>
                <Slant kind="active" />
                <Tab>Sheet2</Tab>
                <Slant />
                <Tab>Sheet3</Tab>
                <Slant kind="last" />
                <Spacer />
                <HScroll>
                    <ScrollButton aria-label="向左"><Chevron turn={-90} /></ScrollButton>
                    <Thumb $across><svg width="12" height="10"><path d="M1 0v9M4 0v9M7 0v9M10 0v9" stroke="#eef3ff" /><path d="M2 1v9M5 1v9M8 1v9M11 1v9" stroke="#8ea8e4" /></svg></Thumb>
                </HScroll>
            </TabRow>

            <Toolbar $tall>
                <Tools>
                    <Grip />
                    <DrawLabel>绘图<span>(<u>R</u>)</span></DrawLabel>
                    <ToolItems items={['v', 'pointer', '|']} />
                    <DrawLabel>自选图形<span>(<u>U</u>)</span></DrawLabel>
                    <ToolItems items={['v', ...drawTools]} />
                </Tools>
                <BarEnd />
            </Toolbar>

            <StatusBar>
                就绪
                <Spacer />
                <StatusCell $w={52} />
                <StatusCell $w={168} />
                <StatusCell $w={42} />
                <StatusCell $w={42} />
                <StatusCell $w={42} />
                <StatusCell $w={182} />
            </StatusBar>

            <Taskbar>
                <StartButton><Icon size={28}>{icons.flag}</Icon>开始</StartButton>
                <TaskButton><Icon>{icons.folder}</Icon>Excel2003</TaskButton>
                <TaskButton $on><ExcelLogo />Microsoft Excel ...</TaskButton>
                <Spacer />
                <Tray>
                    {['keyboard', 'mic', 'handwrite', 'pad'].map(name => <Icon key={name} size={24}>{icons[name]}</Icon>)}
                </Tray>
            </Taskbar>
        </Window>

        <BrushCursor width="50" height="44" viewBox="0 0 50 44" fill="none">
            <path d="M47 8L3 40q26 4 38-11 6-10 6-21z" stroke="#9db5e6" />
            <path d="M3 4q8 0 13 8l-4 5Q7 14 3 4z" fill="#a8553f" />
            <path d="M16 11l6 5-5 6-5-5z" fill="#f0b95c" />
            <path d="M21 16l18 15-8 8-15-17z" fill="#1c1c1c" />
            <path d="M21 19l13 12" stroke="#666" strokeWidth="2" />
        </BrushCursor>

        <QuestionDialog />
    </Desktop>
);

export default App;
